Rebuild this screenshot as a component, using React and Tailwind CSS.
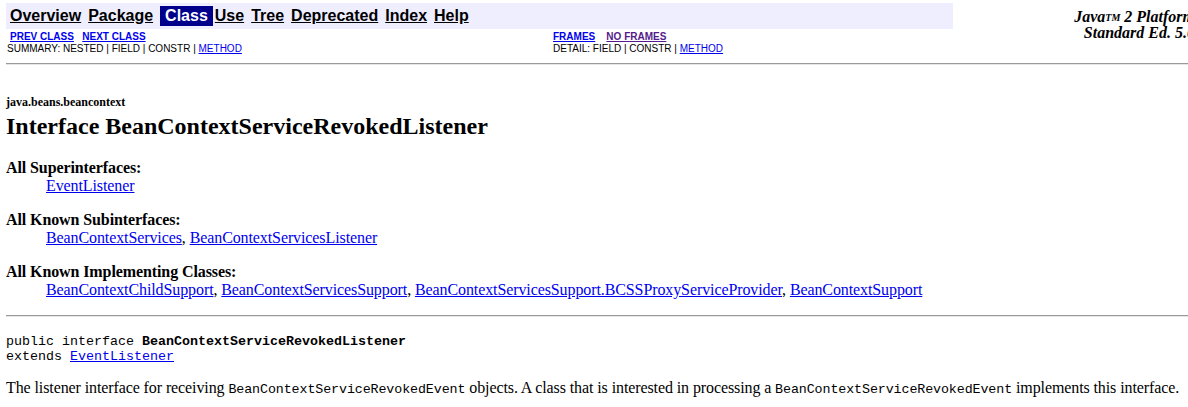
import React from 'react';

const serif = "font-['Liberation_Serif','Times_New_Roman',serif]";
const sans = "font-['Liberation_Sans',Arial,sans-serif]";
const mono = "font-['Liberation_Mono','Courier_New',monospace]";

const navItems = ['Overview', 'Package', 'Class', 'Use', 'Tree', 'Deprecated', 'Index', 'Help'];

function Link({ children, visited }) {
  return (
    <a href="#" className={`underline ${visited ? 'text-[#551a8b]' : 'text-[#0000ee]'}`}>
      {children}
    </a>
  );
}

function Rule() {
  return <div className="h-[2px] border-t border-[#9a9a9a] border-b border-b-[#e6e6e6]" />;
}

function Group({ title, links, first }) {
  return (
    <div className={first ? '' : 'mt-[16px]'}>
      <div className="font-bold leading-[18px]">{title}</div>
      <div className="pl-[40px] leading-[18px]">
        {links.map((l, i) => (
          <span key={l}>
            <Link>{l}</Link>
            {i < links.length - 1 && ', '}
          </span>
        ))}
      </div>
    </div>
  );
}

export default function App() {
  return (
    <div className={`w-full overflow-hidden bg-white text-black ${serif} pl-[6px] pt-[3px] pb-4`}>
      {/* top nav */}
      <div className="flex h-[26px] items-start">
        <div className={`w-[947px] h-[26px] bg-[#eeeeff] flex items-center gap-[7px] pl-[4px] ${sans} text-[16px] font-bold shrink-0`}>
          {navItems.map(n =>
            n === 'Class' ? (
              <span key={n} className="bg-[#00008b] text-white px-[5px] h-[20px] flex items-center -mr-[5px]">{n}</span>
            ) : (
              <a key={n} href="#" className="underline text-black">{n}</a>
            )
          )}
        </div>
        <div className={`ml-[116px] w-[126px] shrink-0 text-right whitespace-nowrap font-bold italic text-[16px] leading-[16px] pt-[6px] ${serif}`}>
          <div>Java<sup className="text-[10px] relative -top-[1px]">TM</sup> 2 Platform</div>
          <div>Standard Ed. 5.0</div>
        </div>
      </div>

      <div className={`grid grid-cols-[547px_1fr] ${sans} text-[10px] leading-[12px] mt-[2px]`}>
        <div className="pl-[4px] font-bold">
          <Link>PREV CLASS</Link>&nbsp;&nbsp;&nbsp;<Link>NEXT CLASS</Link>
        </div>
        <div className="font-bold">
          <Link>FRAMES</Link>&nbsp;&nbsp;&nbsp;&nbsp;<Link visited>NO FRAMES</Link>
        </div>
        <div className="pl-[1px]">
          SUMMARY: NESTED | FIELD | CONSTR | <Link>METHOD</Link>
        </div>
        <div>
          DETAIL: FIELD | CONSTR | <Link>METHOD</Link>
        </div>
      </div>

      <div className="mt-[8px]">
        <Rule />
      </div>

      <div className="mt-[30px] text-[12px] leading-[14px] font-bold">java.beans.beancontext</div>
      <h2 className="mt-[3px] text-[24px] leading-[28px] font-bold">Interface BeanContextServiceRevokedListener</h2>

      <div className="mt-[19px] text-[16px] tracking-[-0.1px]">
        <Group first title="All Superinterfaces:" links={['EventListener']} />
        <Group title="All Known Subinterfaces:" links={['BeanContextServices', 'BeanContextServicesListener']} />
        <Group
          title="All Known Implementing Classes:"
          links={[
            'BeanContextChildSupport',
            'BeanContextServicesSupport',
            'BeanContextServicesSupport.BCSSProxyServiceProvider',
            'BeanContextSupport',
          ]}
        />
      </div>

      <div className="mt-[16px]">
        <Rule />
      </div>

      <div className={`mt-[17px] ${mono} text-[13.33px] leading-[15px] whitespace-pre`}>
        <div>public interface <b>BeanContextServiceRevokedListener</b></div>
        <div>extends <Link>EventListener</Link></div>
      </div>

      <p className="mt-[15px] text-[16px] leading-[18px] whitespace-nowrap tracking-[-0.1px]">
        The listener interface for receiving <code className={`${mono} text-[13.33px]`}>BeanContextServiceRevokedEvent</code> objects. A class that is interested in processing a <code className={`${mono} text-[13.33px]`}>BeanContextServiceRevokedEvent</code> implements this interface.
      </p>
    </div>
  );
}
